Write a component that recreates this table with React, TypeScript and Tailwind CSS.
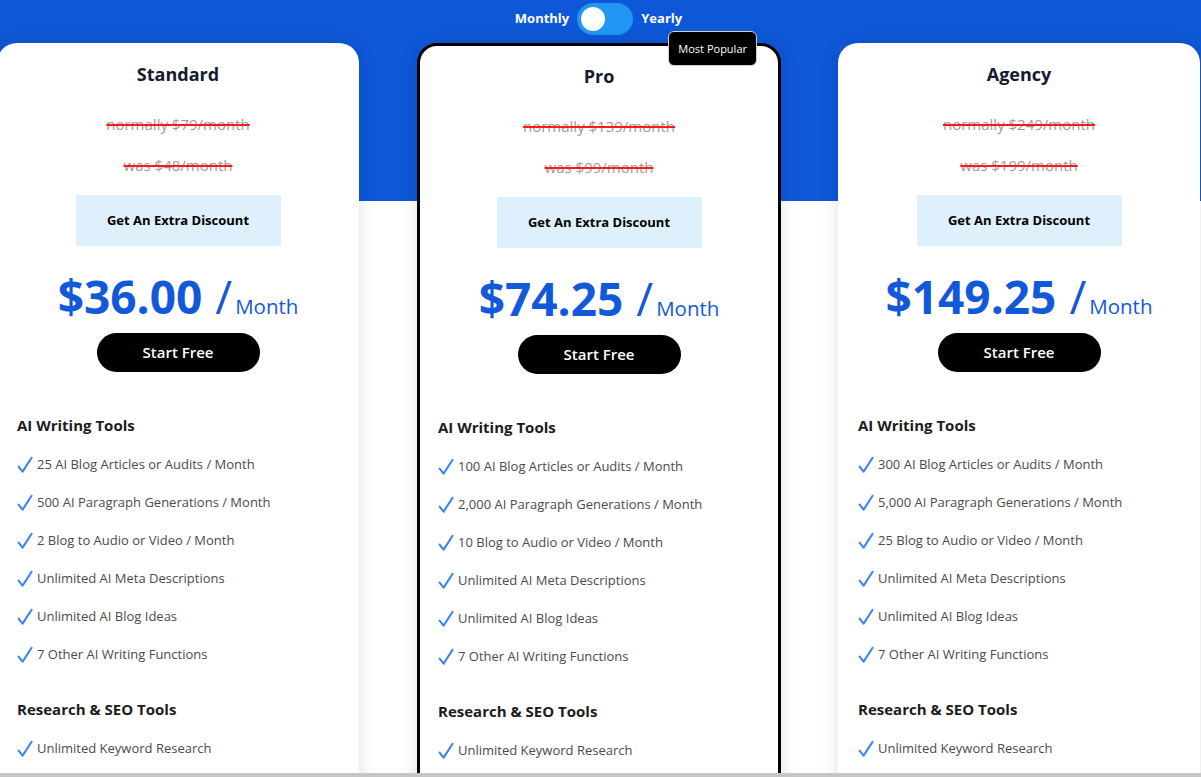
import React from "react";

type Plan = {
  name: string;
  normally: string;
  was: string;
  price: string;
  popular?: boolean;
  width: string;
  writing: string[];
};

const plans: Plan[] = [
  {
    name: "Standard",
    normally: "normally $79/month",
    was: "was $48/month",
    price: "$36.00",
    width: "w-[362px]",
    writing: [
      "25 AI Blog Articles or Audits / Month",
      "500 AI Paragraph Generations / Month",
      "2 Blog to Audio or Video / Month",
      "Unlimited AI Meta Descriptions",
      "Unlimited AI Blog Ideas",
      "7 Other AI Writing Functions",
    ],
  },
  {
    name: "Pro",
    normally: "normally $139/month",
    was: "was $99/month",
    price: "$74.25",
    popular: true,
    width: "w-[364px]",
    writing: [
      "100 AI Blog Articles or Audits / Month",
      "2,000 AI Paragraph Generations / Month",
      "10 Blog to Audio or Video / Month",
      "Unlimited AI Meta Descriptions",
      "Unlimited AI Blog Ideas",
      "7 Other AI Writing Functions",
    ],
  },
  {
    name: "Agency",
    normally: "normally $249/month",
    was: "was $199/month",
    price: "$149.25",
    width: "w-[362px]",
    writing: [
      "300 AI Blog Articles or Audits / Month",
      "5,000 AI Paragraph Generations / Month",
      "25 Blog to Audio or Video / Month",
      "Unlimited AI Meta Descriptions",
      "Unlimited AI Blog Ideas",
      "7 Other AI Writing Functions",
    ],
  },
];

const Check = () => (
  <svg width="16" height="18" viewBox="0 0 16 18" fill="none" className="shrink-0">
    <path
      d="M1.6 10.6 L5.6 15.6 L14.6 1.8"
      stroke="#3d85f0"
      strokeWidth="2.1"
      strokeLinecap="round"
      strokeLinejoin="round"
    />
  </svg>
);

const Feature = ({ text }: { text: string }) => (
  <li className="flex h-[38px] items-center gap-[4px] text-[13px] text-[#4a4a4a]">
    <Check />
    <span>{text}</span>
  </li>
);

const Card = ({ plan }: { plan: Plan }) => (
  <div
    className={`relative ${plan.width} h-[800px] shrink-0 rounded-[20px] bg-white shadow-[0_0_18px_rgba(0,0,0,0.12)] ${
      plan.popular ? "border-[3px] border-black pt-[17px] px-[18px]" : "pt-[18px] px-[20px]"
    }`}
  >
    {plan.popular && (
      <div className="absolute right-[21px] -top-[15px] rounded-[6px] border border-[#d0d0d0] bg-black px-[9px] py-[9px] text-[11px] leading-[15px] text-white">
        Most Popular
      </div>
    )}
    <div className="flex flex-col items-center">
      <h3 className="text-[18px] leading-[26px] font-bold text-[#161a2e]">{plan.name}</h3>
      <p className="mt-[26px] text-[15px] leading-[22px] text-[#9a9a9a] line-through decoration-[#ff1a1a] decoration-2">
        {plan.normally}
      </p>
      <p className="mt-[19px] text-[15px] leading-[22px] text-[#9a9a9a] line-through decoration-[#ff1a1a] decoration-2">
        {plan.was}
      </p>
      <div className="mt-[19px] flex h-[51px] w-[205px] items-center justify-center bg-[#ddf0fc] text-[13px] font-bold text-black">
        Get An Extra Discount
      </div>
      <div className="mt-[22px] flex h-[56px] items-baseline text-[#1259da]">
        <span className="text-[46px] font-bold leading-[56px]">{plan.price}</span>
        <span className="ml-[13px] text-[46px] leading-[56px]">/</span>
        <span className="ml-[3px] text-[20.5px] leading-[56px]">Month</span>
      </div>
      <button className="mt-[9px] h-[39px] w-[163px] rounded-full bg-black text-[15px] font-semibold text-white">
        Start Free
      </button>
    </div>
    <h4 className="mt-[42px] text-[15px] leading-[22px] font-bold text-[#1c1c1c]">AI Writing Tools</h4>
    <ul className="mt-[10px]">
      {plan.writing.map((f) => (
        <Feature key={f} text={f} />
      ))}
    </ul>
    <h4 className="mt-[24px] text-[15px] leading-[22px] font-bold text-[#1c1c1c]">Research &amp; SEO Tools</h4>
    <ul className="mt-[10px]">
      <Feature text="Unlimited Keyword Research" />
    </ul>
  </div>
);

export default function App() {
  return (
    <div className="flex h-[777px] w-full flex-col overflow-hidden bg-white font-['Open_Sans',sans-serif]">
      <div className="relative flex-1 overflow-hidden">
        <div className="h-[201px] bg-[#0e58d8] pt-[3px]">
          <div className="flex items-center justify-center gap-[8px] pr-[4px] text-[13px] font-bold text-white">
            <span>Monthly</span>
            <div className="flex h-[32px] w-[56px] items-center rounded-full bg-[#2196f3] px-[4px]">
              <div className="h-[24px] w-[24px] rounded-full bg-white" />
            </div>
            <span>Yearly</span>
          </div>
        </div>
        <div className="-mt-[158px] -ml-[3px] flex">
          <Card plan={plans[0]} />
          <div className="w-[58px] shrink-0" />
          <Card plan={plans[1]} />
          <div className="w-[57px] shrink-0" />
          <Card plan={plans[2]} />
        </div>
      </div>
      <div className="h-[4px] shrink-0 bg-[#c6c6c6]" />
    </div>
  );
}
